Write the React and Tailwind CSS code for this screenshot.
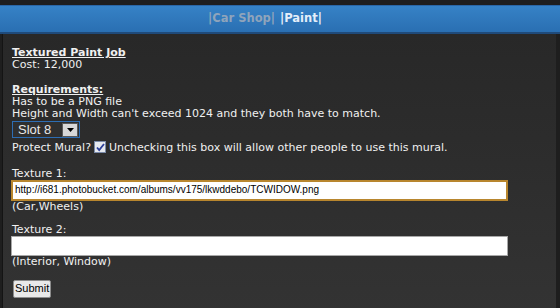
import React from 'react';

const font = { fontFamily: '"DejaVu Sans", Verdana, sans-serif' };
const arial = { fontFamily: '"Liberation Sans", Arial, sans-serif' };

const SlotSelect = () => (
  <div className="flex items-center w-[68px] h-[17px] border border-[#2d6db3] bg-[#2f2f2f] mt-[1px]" style={arial}>
    <span className="flex-1 pl-[5px] text-[13px] text-[#e8e8e8] leading-none">Slot 8</span>
    <span className="w-[16px] h-[14px] mr-[1px] bg-[#d8d8d8] border border-[#5a5a5a] flex items-center justify-center">
      <svg width="7" height="4" viewBox="0 0 7 4"><path d="M0 0h7L3.5 4z" fill="#000" /></svg>
    </span>
  </div>
);

const Check = () => (
  <span className="inline-flex w-[12px] h-[12px] mx-[3px] border border-[#7a8aa8] bg-[#e6e9ef] items-center justify-center align-[-1px]">
    <svg width="9" height="9" viewBox="0 0 9 9"><path d="M1 4.5l2.2 2.6L8 1" fill="none" stroke="#2c3f9a" strokeWidth="1.8" /></svg>
  </span>
);

const Field = ({ label, value, hint, focused }) => (
  <div>
    <p>{label}</p>
    <div
      className={`w-[497px] -ml-[1px] bg-white flex items-center px-[2px] text-[10px] text-black ${focused ? 'h-[21px] border-2 border-[#b8862e]' : 'h-[20px] border border-[#a8a8a8]'}`}
      style={arial}
    >
      {value}
    </div>
    <p>{hint}</p>
  </div>
);

export default function App() {
  return (
    <div className="w-[560px] h-[308px] bg-[#1e1e1e] pt-[5px] overflow-hidden">
      <div className="h-[29px] pr-[30px] bg-gradient-to-b from-[#3682c6] to-[#2a6fb2] border-t border-[#2a66a6] border-b-2 border-b-[#1f4a7a] flex items-center justify-center text-[11.5px] font-bold" style={font}>
        <span className="text-[#8fa4bb]">|Car Shop|</span>
        <span className="text-[#e4eefa] ml-[5px]">|Paint|</span>
      </div>
      <div className="ml-[2px] mr-[4px] h-[280px] border-l border-[#141414] bg-gradient-to-b from-[#282828] to-[#333333] pt-[13px] pl-[9px] text-[11px] leading-[12px] text-[#f0f0f0]" style={font}>
        <p className="font-bold underline">Textured Paint Job</p>
        <p>Cost: 12,000</p>
        <p className="mt-[13px] font-bold underline">Requirements:</p>
        <p>Has to be a PNG file</p>
        <p>Height and Width can't exceed 1024 and they both have to match.</p>
        <SlotSelect />
        <p className="mt-[3px]">Protect Mural?<Check />Unchecking this box will allow other people to use this mural.</p>
        <div className="mt-[14px]">
          <Field label="Texture 1:" value="http://i681.photobucket.com/albums/vv175/lkwddebo/TCWIDOW.png" hint="(Car,Wheels)" focused />
        </div>
        <div className="mt-[11px]">
          <Field label="Texture 2:" value="" hint="(Interior, Window)" />
        </div>
        <button className="mt-[12px] ml-[1px] h-[18px] px-[1px] bg-[#e9e9e9] border border-[#8c8c8c] rounded-[2px] text-[11px] text-black leading-none" style={arial}>Submit</button>
      </div>
    </div>
  );
}
